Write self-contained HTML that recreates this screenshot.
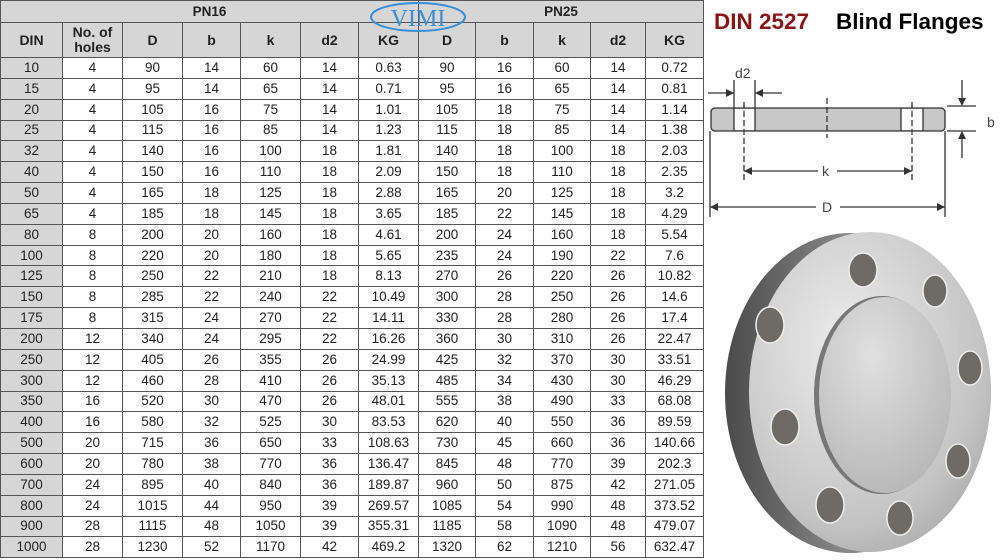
<!DOCTYPE html>
<html><head><meta charset="utf-8"><style>
body{margin:0;width:1000px;height:560px;background:#fff;position:relative;overflow:hidden;font-family:"Liberation Sans",Arial,sans-serif}
table{position:absolute;left:0;top:0;border-collapse:collapse;table-layout:fixed;width:703px}
td{border:1px solid #555;text-align:center;font-size:13.5px;color:#222;padding:0;height:19.85px;line-height:14px}
tr.h1 td{height:21px;background:#d6d6d6;font-weight:bold}
tr.h2 td{height:34px;background:#d6d6d6;font-weight:bold;font-size:14px;line-height:15px}
td.g{background:#d6d6d6}
</style></head><body>
<table>
<colgroup><col style="width:62px"><col style="width:60px"><col style="width:60px"><col style="width:58px"><col style="width:60px"><col style="width:58px"><col style="width:60px"><col style="width:57px"><col style="width:58px"><col style="width:57px"><col style="width:55px"><col style="width:58px"></colgroup>
<tr class="h1"><td colspan="7">PN16</td><td colspan="5">PN25</td></tr>
<tr class="h2"><td>DIN</td><td>No. of<br>holes</td><td>D</td><td>b</td><td>k</td><td>d2</td><td>KG</td><td>D</td><td>b</td><td>k</td><td>d2</td><td>KG</td></tr>
<tr><td class="g">10</td><td>4</td><td>90</td><td>14</td><td>60</td><td>14</td><td>0.63</td><td>90</td><td>16</td><td>60</td><td>14</td><td>0.72</td></tr>
<tr><td class="g">15</td><td>4</td><td>95</td><td>14</td><td>65</td><td>14</td><td>0.71</td><td>95</td><td>16</td><td>65</td><td>14</td><td>0.81</td></tr>
<tr><td class="g">20</td><td>4</td><td>105</td><td>16</td><td>75</td><td>14</td><td>1.01</td><td>105</td><td>18</td><td>75</td><td>14</td><td>1.14</td></tr>
<tr><td class="g">25</td><td>4</td><td>115</td><td>16</td><td>85</td><td>14</td><td>1.23</td><td>115</td><td>18</td><td>85</td><td>14</td><td>1.38</td></tr>
<tr><td class="g">32</td><td>4</td><td>140</td><td>16</td><td>100</td><td>18</td><td>1.81</td><td>140</td><td>18</td><td>100</td><td>18</td><td>2.03</td></tr>
<tr><td class="g">40</td><td>4</td><td>150</td><td>16</td><td>110</td><td>18</td><td>2.09</td><td>150</td><td>18</td><td>110</td><td>18</td><td>2.35</td></tr>
<tr><td class="g">50</td><td>4</td><td>165</td><td>18</td><td>125</td><td>18</td><td>2.88</td><td>165</td><td>20</td><td>125</td><td>18</td><td>3.2</td></tr>
<tr><td class="g">65</td><td>4</td><td>185</td><td>18</td><td>145</td><td>18</td><td>3.65</td><td>185</td><td>22</td><td>145</td><td>18</td><td>4.29</td></tr>
<tr><td class="g">80</td><td>8</td><td>200</td><td>20</td><td>160</td><td>18</td><td>4.61</td><td>200</td><td>24</td><td>160</td><td>18</td><td>5.54</td></tr>
<tr><td class="g">100</td><td>8</td><td>220</td><td>20</td><td>180</td><td>18</td><td>5.65</td><td>235</td><td>24</td><td>190</td><td>22</td><td>7.6</td></tr>
<tr><td class="g">125</td><td>8</td><td>250</td><td>22</td><td>210</td><td>18</td><td>8.13</td><td>270</td><td>26</td><td>220</td><td>26</td><td>10.82</td></tr>
<tr><td class="g">150</td><td>8</td><td>285</td><td>22</td><td>240</td><td>22</td><td>10.49</td><td>300</td><td>28</td><td>250</td><td>26</td><td>14.6</td></tr>
<tr><td class="g">175</td><td>8</td><td>315</td><td>24</td><td>270</td><td>22</td><td>14.11</td><td>330</td><td>28</td><td>280</td><td>26</td><td>17.4</td></tr>
<tr><td class="g">200</td><td>12</td><td>340</td><td>24</td><td>295</td><td>22</td><td>16.26</td><td>360</td><td>30</td><td>310</td><td>26</td><td>22.47</td></tr>
<tr><td class="g">250</td><td>12</td><td>405</td><td>26</td><td>355</td><td>26</td><td>24.99</td><td>425</td><td>32</td><td>370</td><td>30</td><td>33.51</td></tr>
<tr><td class="g">300</td><td>12</td><td>460</td><td>28</td><td>410</td><td>26</td><td>35.13</td><td>485</td><td>34</td><td>430</td><td>30</td><td>46.29</td></tr>
<tr><td class="g">350</td><td>16</td><td>520</td><td>30</td><td>470</td><td>26</td><td>48.01</td><td>555</td><td>38</td><td>490</td><td>33</td><td>68.08</td></tr>
<tr><td class="g">400</td><td>16</td><td>580</td><td>32</td><td>525</td><td>30</td><td>83.53</td><td>620</td><td>40</td><td>550</td><td>36</td><td>89.59</td></tr>
<tr><td class="g">500</td><td>20</td><td>715</td><td>36</td><td>650</td><td>33</td><td>108.63</td><td>730</td><td>45</td><td>660</td><td>36</td><td>140.66</td></tr>
<tr><td class="g">600</td><td>20</td><td>780</td><td>38</td><td>770</td><td>36</td><td>136.47</td><td>845</td><td>48</td><td>770</td><td>39</td><td>202.3</td></tr>
<tr><td class="g">700</td><td>24</td><td>895</td><td>40</td><td>840</td><td>36</td><td>189.87</td><td>960</td><td>50</td><td>875</td><td>42</td><td>271.05</td></tr>
<tr><td class="g">800</td><td>24</td><td>1015</td><td>44</td><td>950</td><td>39</td><td>269.57</td><td>1085</td><td>54</td><td>990</td><td>48</td><td>373.52</td></tr>
<tr><td class="g">900</td><td>28</td><td>1115</td><td>48</td><td>1050</td><td>39</td><td>355.31</td><td>1185</td><td>58</td><td>1090</td><td>48</td><td>479.07</td></tr>
<tr><td class="g">1000</td><td>28</td><td>1230</td><td>52</td><td>1170</td><td>42</td><td>469.2</td><td>1320</td><td>62</td><td>1210</td><td>56</td><td>632.47</td></tr>
</table>
<svg style="position:absolute;left:0;top:0" width="1000" height="560">
<ellipse cx="418" cy="17" rx="47" ry="14" fill="none" stroke="#3a8fd6" stroke-width="2"/>
<text x="418" y="26" text-anchor="middle" font-family="Liberation Serif,serif" font-size="24" fill="#3a8fd6">VIMI</text>
<text x="714" y="29" font-family="Liberation Sans,sans-serif" font-weight="bold" font-size="22.5" fill="#8b1414">DIN 2527</text>
<text x="836" y="29" font-family="Liberation Sans,sans-serif" font-weight="bold" font-size="22.5" fill="#000">Blind Flanges</text>
<g stroke="#333" stroke-width="1.3" fill="none">
<rect x="711" y="108" width="234" height="23" rx="4" fill="#c8c8c8"/>
<rect x="734" y="109" width="21" height="21" fill="#fff" stroke="none"/>
<rect x="901" y="109" width="22" height="21" fill="#fff" stroke="none"/>
<line x1="734" y1="108" x2="734" y2="131"/><line x1="755" y1="108" x2="755" y2="131"/>
<line x1="901" y1="108" x2="901" y2="131"/><line x1="923" y1="108" x2="923" y2="131"/>
<line x1="744" y1="102" x2="744" y2="182" stroke-dasharray="6,3"/>
<line x1="912" y1="102" x2="912" y2="182" stroke-dasharray="6,3"/>
<line x1="827" y1="98" x2="827" y2="138" stroke-dasharray="6,3"/>
<line x1="734" y1="80" x2="734" y2="108"/><line x1="755" y1="80" x2="755" y2="108"/>
<line x1="708" y1="93" x2="734" y2="93"/><line x1="755" y1="93" x2="782" y2="93"/>
<line x1="710" y1="131" x2="710" y2="217"/><line x1="945" y1="131" x2="945" y2="217"/>
<line x1="744" y1="171" x2="818" y2="171"/><line x1="837" y1="171" x2="912" y2="171"/>
<line x1="710" y1="207" x2="816" y2="207"/><line x1="840" y1="207" x2="945" y2="207"/>
<line x1="947" y1="106" x2="976" y2="106"/><line x1="947" y1="131" x2="976" y2="131"/>
<line x1="962" y1="80" x2="962" y2="104"/><line x1="962" y1="133" x2="962" y2="158"/>
</g>
<g fill="#333">
<polygon points="734,93 726,89 726,97"/><polygon points="755,93 763,89 763,97"/>
<polygon points="744,171 752,167 752,175"/><polygon points="912,171 904,167 904,175"/>
<polygon points="710,207 718,203 718,211"/><polygon points="945,207 937,203 937,211"/>
<polygon points="962,106 958,98 966,98"/><polygon points="962,131 958,139 966,139"/>
</g>
<g font-family="Liberation Sans,sans-serif" font-size="14" fill="#444">
<text x="735" y="78">d2</text><text x="822" y="176">k</text><text x="822" y="212">D</text><text x="987" y="127">b</text>
</g>
<defs>
<linearGradient id="rim" x1="0" x2="1"><stop offset="0" stop-color="#4a4a4a"/><stop offset="0.5" stop-color="#8a8a8a"/><stop offset="1" stop-color="#555"/></linearGradient>
<radialGradient id="face" cx="0.4" cy="0.35" r="0.8"><stop offset="0" stop-color="#ececec"/><stop offset="0.7" stop-color="#c4c4c4"/><stop offset="1" stop-color="#a0a0a0"/></radialGradient>
<radialGradient id="rf" cx="0.4" cy="0.3" r="0.8"><stop offset="0" stop-color="#e0e0e0"/><stop offset="1" stop-color="#b4b4b4"/></radialGradient>
</defs>
<ellipse cx="850" cy="393" rx="125" ry="160" fill="url(#rim)"/>
<ellipse cx="870" cy="392" rx="121" ry="160" fill="url(#face)"/>
<ellipse cx="882" cy="395" rx="68" ry="99" fill="#777"/>
<ellipse cx="885" cy="395" rx="66" ry="98" fill="url(#rf)"/>
<g fill="#6e6a66" stroke="#eee" stroke-width="1.5">
<ellipse cx="863" cy="270" rx="14" ry="17"/><ellipse cx="935" cy="291" rx="12" ry="16"/>
<ellipse cx="770" cy="325" rx="14" ry="18"/><ellipse cx="970" cy="368" rx="12" ry="17"/>
<ellipse cx="785" cy="427" rx="14" ry="18"/><ellipse cx="958" cy="461" rx="12" ry="17"/>
<ellipse cx="830" cy="505" rx="14" ry="18"/><ellipse cx="900" cy="518" rx="13" ry="17"/>
</g>
</svg>
</body></html>
